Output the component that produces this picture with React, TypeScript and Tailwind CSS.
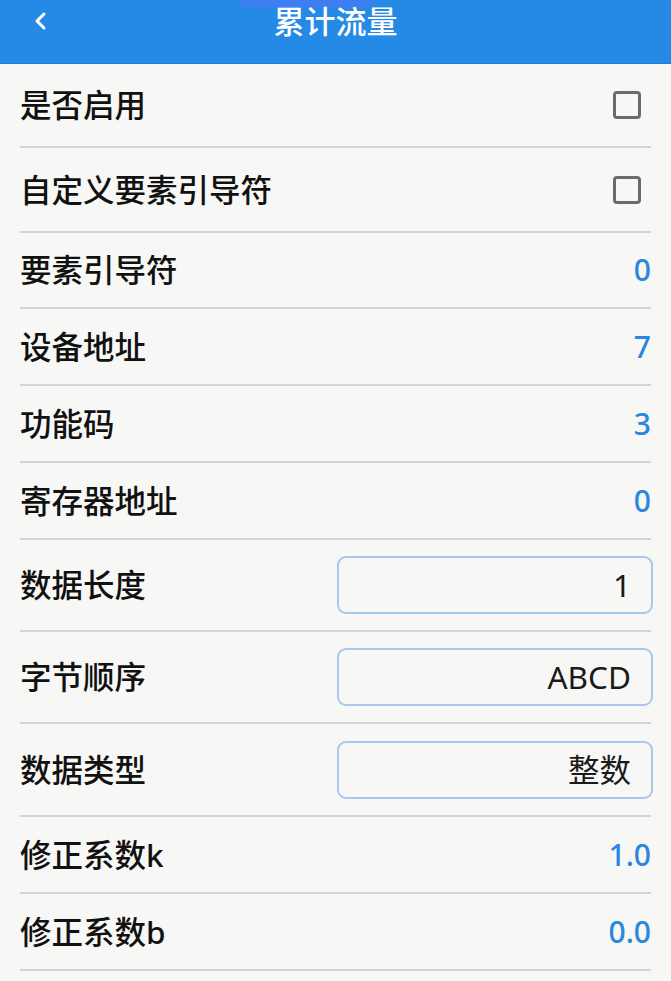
import React from "react";

type Row =
    | { kind: "check"; label: string; h: string }
    | { kind: "value"; label: string; value: string; h: string }
    | { kind: "input"; label: string; value: string; h: string };

const rows: Row[] = [
    { kind: "check", label: "是否启用", h: "h-[84px]" },
    { kind: "check", label: "自定义要素引导符", h: "h-[85px]" },
    { kind: "value", label: "要素引导符", value: "0", h: "h-[76px]" },
    { kind: "value", label: "设备地址", value: "7", h: "h-[77px]" },
    { kind: "value", label: "功能码", value: "3", h: "h-[77px]" },
    { kind: "value", label: "寄存器地址", value: "0", h: "h-[77px]" },
    { kind: "input", label: "数据长度", value: "1", h: "h-[92px]" },
    { kind: "input", label: "字节顺序", value: "ABCD", h: "h-[92px]" },
    { kind: "input", label: "数据类型", value: "整数", h: "h-[93px]" },
    { kind: "value", label: "修正系数k", value: "1.0", h: "h-[77px]" },
    { kind: "value", label: "修正系数b", value: "0.0", h: "h-[77px]" },
];

export default function App() {
    return (
        <div className="w-[671px] h-[981px] overflow-hidden bg-[#f7f7f5] font-['Noto_Sans','Noto_Sans_CJK_SC',sans-serif]">
            {/* Header */}
            <div className="relative h-16 bg-[#2589e6] border-b border-[#1f7fd8]">
                <div className="absolute left-[238px] -top-[12px] w-[136px] h-[20px] rounded-full bg-[#3d7ef0]" />
                <div className="relative flex items-center h-[42px] px-[32px]">
                    <svg width="16" height="20" viewBox="0 0 16 20" className="shrink-0">
                        <path d="M12 3 L5 10 L12 17" fill="none" stroke="white" strokeWidth="3" strokeLinecap="round" strokeLinejoin="round" />
                    </svg>
                    <h1 className="absolute left-0 right-0 text-center text-[31px] leading-none font-medium text-white pointer-events-none">
                        累计流量
                    </h1>
                </div>
            </div>

            {/* Settings list */}
            <div className="flex flex-col">
                {rows.map((row) => (
                    <div
                        key={row.label}
                        className={`${row.h} mx-5 flex items-center justify-between border-b-2 border-[#d4d4d2]`}
                    >
                        <span className="text-[31.5px] leading-none font-medium text-[#111]">{row.label}</span>
                        {row.kind === "check" && (
                            <span className="mr-[10px] w-[28px] h-[28px] rounded-[4px] border-[3px] border-[#6b6b6b]" />
                        )}
                        {row.kind === "value" && (
                            <span className="text-[30px] leading-none font-medium text-[#2a86df]">{row.value}</span>
                        )}
                        {row.kind === "input" && (
                            <div className="w-[316px] h-[58px] -mr-[2px] rounded-[9px] border-2 border-[#a9c6ec] flex items-center justify-end pr-[20px]">
                                <span className="text-[31.5px] leading-none text-[#1a1a1a]">{row.value}</span>
                            </div>
                        )}
                    </div>
                ))}
            </div>
        </div>
    );
}
